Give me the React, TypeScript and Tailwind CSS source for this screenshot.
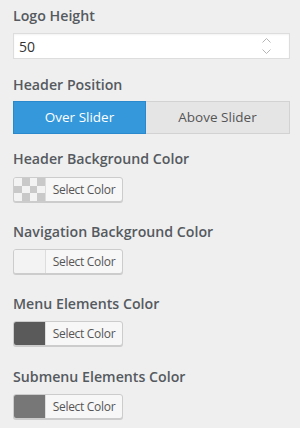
const font = { fontFamily: '"Open Sans", "Noto Sans", sans-serif' };

const Label = ({ children, className = "" }: { children: string; className?: string }) => (
  <div className={`h-5 text-[14.2px] leading-5 font-semibold text-[#555a60] ${className}`}>
    {children}
  </div>
);

const ColorButton = ({ swatch }: { swatch: "checker" | string }) => (
  <div className="flex h-[25px] w-[110px] rounded-[3px] border border-[#cccccc] bg-[#f7f7f7] overflow-hidden shadow-[0_1px_0_#cccccc]">
    {swatch === "checker" ? (
      <div className="grid w-[32px] grid-cols-4 grid-rows-3 border-r border-[#dddddd]">
        {Array.from({ length: 12 }).map((_, i) => {
          const r = Math.floor(i / 4);
          const c = i % 4;
          const dark = (r + c) % 2 === 1;
          return <div key={i} className={dark ? "bg-[#c9c9c9]" : "bg-[#f3f3f3]"} />;
        })}
      </div>
    ) : (
      <div className="w-[32px] border-r border-[#dddddd]" style={{ background: swatch }} />
    )}
    <div className="flex flex-1 items-center justify-center text-[12px] text-[#555555] tracking-[-0.3px]">
      Select Color
    </div>
  </div>
);

export default function App() {
  return (
    <div className="min-h-[428px] w-[300px] bg-[#efefef] pl-[13px] pr-[10px] pt-[6px]" style={font}>
      <Label className="mb-[7px]">Logo Height</Label>
      <div className="flex h-[26px] w-[277px] items-center justify-between border border-[#dddddd] bg-white pl-[5px] pr-[18px] shadow-[inset_0_1px_2px_rgba(0,0,0,0.05)]">
        <span className="text-[14px] text-[#333333]">50</span>
        <div className="flex flex-col items-center gap-[6px]">
          <svg width="9" height="5" viewBox="0 0 9 5" fill="none" stroke="#b5b5b5" strokeWidth="1">
            <path d="M0.5 4.5 L4.5 0.5 L8.5 4.5" />
          </svg>
          <svg width="9" height="5" viewBox="0 0 9 5" fill="none" stroke="#b5b5b5" strokeWidth="1">
            <path d="M0.5 0.5 L4.5 4.5 L8.5 0.5" />
          </svg>
        </div>
      </div>

      <Label className="mt-[16px] mb-[6px]">Header Position</Label>
      <div className="flex h-[33px] w-[277px] text-[13.5px]">
        <div className="flex w-[133px] items-center justify-center border border-[#2a88cc] bg-[#3498db] text-white">
          Over Slider
        </div>
        <div className="flex flex-1 items-center justify-center border border-l-0 border-[#d2d2d2] bg-[#e5e5e5] text-[#555555]">
          Above Slider
        </div>
      </div>

      <Label className="mt-[15px] mb-[8px]">Header Background Color</Label>
      <ColorButton swatch="checker" />

      <Label className="mt-[20px] mb-[7px]">Navigation Background Color</Label>
      <ColorButton swatch="#f3f3f3" />

      <Label className="mt-[20px] mb-[7px]">Menu Elements Color</Label>
      <ColorButton swatch="#5a5a5a" />

      <Label className="mt-[21px] mb-[7px]">Submenu Elements Color</Label>
      <ColorButton swatch="#777777" />
    </div>
  );
}
